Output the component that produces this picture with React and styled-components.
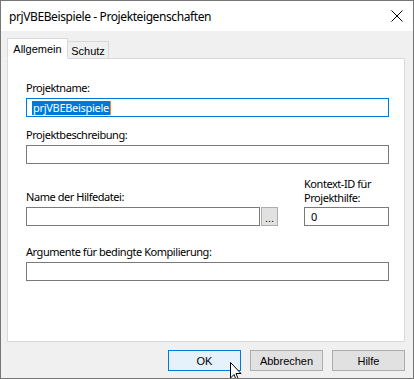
import React from 'react';
import styled, { createGlobalStyle } from 'styled-components';

const GlobalStyle = createGlobalStyle`
    html, body {
        margin: 0;
        padding: 0;
        background: #f0f0f0;
    }
    * {
        box-sizing: border-box;
    }
`;

const Window = styled.div`
    position: relative;
    width: 414px;
    height: 379px;
    border: 1px solid #767676;
    background: #f0f0f0;
    display: flex;
    flex-direction: column;
    overflow: hidden;
`;

const TitleBar = styled.div`
    height: 30px;
    background: #ffffff;
    display: flex;
    align-items: center;
    justify-content: space-between;
    padding: 0 10px 0 8px;
    font-family: "Noto Sans", "Open Sans", sans-serif;
    font-size: 12px;
    letter-spacing: -0.4px;
    color: #000;
`;

const Body = styled.div`
    flex: 1;
    display: flex;
    flex-direction: column;
    padding: 7px 8px 0 6px;
`;

const TabStrip = styled.div`
    display: flex;
    align-items: flex-end;
    height: 20px;
    position: relative;
    z-index: 1;
`;

const Tab = styled.div`
    font-family: "Liberation Sans", Arial, sans-serif;
    font-size: 11px;
    color: #000;
    display: flex;
    align-items: center;
    justify-content: center;
    border: 1px solid #d9d9d9;
    border-bottom: ${p => (p.$active ? '1px solid #ffffff' : 'none')};
    background: ${p => (p.$active ? '#ffffff' : '#f0f0f0')};
    width: ${p => p.$width}px;
    height: ${p => (p.$active ? 21 : 17)}px;
    margin-bottom: ${p => (p.$active ? -1 : 0)}px;
    margin-left: ${p => (p.$active ? 0 : -1)}px;
    padding-top: ${p => (p.$active ? 0 : 1)}px;
`;

const Panel = styled.div`
    background: #ffffff;
    border: 1px solid #d9d9d9;
    height: 284px;
    padding: 22px 15px 0 18px;
    display: flex;
    flex-direction: column;
`;

const Field = styled.div`
    display: flex;
    flex-direction: column;
    margin-top: ${p => p.$top || 0}px;
    width: ${p => (p.$width ? `${p.$width}px` : 'auto')};
`;

const Label = styled.label`
    font-family: "Noto Sans", "Open Sans", sans-serif;
    font-size: 11px;
    letter-spacing: -0.45px;
    line-height: ${p => (p.$multi ? 14 : 13)}px;
    color: #000;
    margin-bottom: ${p => (p.$multi ? 2 : 4)}px;
`;

const TextBox = styled.div`
    height: 19px;
    width: ${p => (p.$width ? `${p.$width}px` : '100%')};
    border: 1px solid ${p => (p.$focused ? '#0078d7' : '#7a7a7a')};
    background: #fff;
    display: flex;
    align-items: center;
    padding-left: ${p => (p.$focused ? 5 : 6)}px;
    font-family: "Noto Sans", "Open Sans", sans-serif;
    font-size: 11px;
    letter-spacing: -0.3px;
    color: #000;
`;

const Selection = styled.span`
    background: #0078d7;
    color: #fff;
    line-height: 14px;
    padding: 0 1px;
    border-right: 1px solid #ff8c1a;
`;

const Row = styled.div`
    display: flex;
    align-items: flex-end;
    margin-top: ${p => p.$top || 0}px;
`;

const BrowseButton = styled.div`
    width: 17px;
    height: 19px;
    margin-left: 1px;
    border: 1px solid #adadad;
    background: #e1e1e1;
    font-family: "Liberation Sans", Arial, sans-serif;
    font-size: 11px;
    color: #000;
    display: flex;
    align-items: flex-end;
    justify-content: center;
    padding-bottom: 3px;
    line-height: 8px;
`;

const Spacer = styled.div`
    flex: 1;
`;

const ButtonRow = styled.div`
    display: flex;
    justify-content: flex-end;
    gap: 9px;
    padding: 8px 0 0 0;
`;

const Button = styled.div`
    width: 73px;
    height: 21px;
    border: 1px solid ${p => (p.$default ? '#0078d7' : '#adadad')};
    background: ${p => (p.$default ? '#e5f1fb' : '#e1e1e1')};
    font-family: "Liberation Sans", Arial, sans-serif;
    font-size: 11px;
    color: #000;
    display: flex;
    align-items: center;
    justify-content: center;
`;

const Cursor = styled.svg`
    position: absolute;
    left: 229px;
    top: 361px;
`;

const App = () => {
    return (
        <>
            <GlobalStyle />
            <Window>
                <TitleBar>
                    <span>prjVBEBeispiele - Projekteigenschaften</span>
                    <svg width="12" height="12" viewBox="0 0 12 12">
                        <path d="M0.5 0.5 L11.5 11.5 M11.5 0.5 L0.5 11.5" stroke="#000" strokeWidth="1" fill="none" />
                    </svg>
                </TitleBar>
                <Body>
                    <TabStrip>
                        <Tab $active $width={61}>Allgemein</Tab>
                        <Tab $width={42}>Schutz</Tab>
                    </TabStrip>
                    <Panel>
                        <Field>
                            <Label>Projektname:</Label>
                            <TextBox $focused>
                                <Selection>prjVBEBeispiele</Selection>
                            </TextBox>
                        </Field>
                        <Field $top={11}>
                            <Label>Projektbeschreibung:</Label>
                            <TextBox />
                        </Field>
                        <Row $top={13}>
                            <Field>
                                <Label>Name der Hilfedatei:</Label>
                                <TextBox $width={234} />
                            </Field>
                            <BrowseButton>...</BrowseButton>
                            <Spacer />
                            <Field $width={85}>
                                <Label $multi>Kontext-ID für<br />Projekthilfe:</Label>
                                <TextBox>0</TextBox>
                            </Field>
                        </Row>
                        <Field $top={19}>
                            <Label>Argumente für bedingte Kompilierung:</Label>
                            <TextBox />
                        </Field>
                    </Panel>
                    <ButtonRow>
                        <Button $default>OK</Button>
                        <Button>Abbrechen</Button>
                        <Button>Hilfe</Button>
                    </ButtonRow>
                </Body>
                <Cursor width="13" height="20" viewBox="0 0 13 20">
                    <path d="M0.5 0.5 L0.5 16 L4 12.5 L6.5 18.5 L8.5 17.5 L6 11.5 L11 11.5 Z" fill="#fff" stroke="#000" strokeWidth="1" strokeLinejoin="miter" />
                </Cursor>
            </Window>
        </>
    );
};

export default App;
